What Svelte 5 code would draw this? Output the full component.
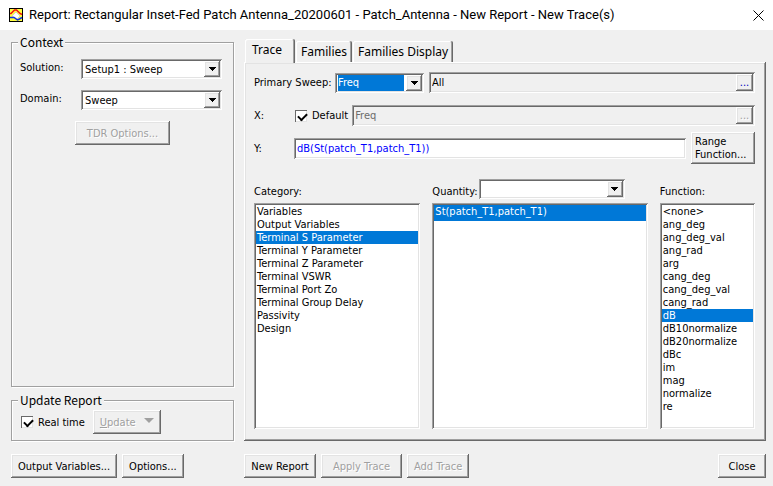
<script>
  const categories = [
    'Variables',
    'Output Variables',
    'Terminal S Parameter',
    'Terminal Y Parameter',
    'Terminal Z Parameter',
    'Terminal VSWR',
    'Terminal Port Zo',
    'Terminal Group Delay',
    'Passivity',
    'Design'
  ];
  const quantities = ['St(patch_T1,patch_T1)'];
  const functions = [
    '<none>', 'ang_deg', 'ang_deg_val', 'ang_rad', 'arg', 'cang_deg', 'cang_deg_val', 'cang_rad',
    'dB', 'dB10normalize', 'dB20normalize', 'dBc', 'im', 'mag', 'normalize', 're'
  ];
  const tabs = ['Trace', 'Families', 'Families Display'];

  let activeTab = $state('Trace');
  let category = $state('Terminal S Parameter');
  let quantity = $state('St(patch_T1,patch_T1)');
  let func = $state('dB');
  let realTime = $state(true);
  let useDefault = $state(true);
  let yExpr = $state('dB(St(patch_T1,patch_T1))');
</script>

{#snippet arrow()}
  <span class="arrow raised">
    <svg width="7" height="4" viewBox="0 0 7 4" shape-rendering="crispEdges"><path d="M0 0h7v1h-7zM1 1h5v1h-5zM2 2h3v1h-3zM3 3h1v1h-1z" /></svg>
  </span>
{/snippet}

<div class="dialog">
  <header>
    <svg class="logo" width="14" height="14" viewBox="0 0 14 14">
      <rect x="0.5" y="0.5" width="13" height="13" fill="#ffff40" stroke="#000" />
      <path d="M3 8L7 4l4 4-3 3z" fill="#fff" stroke="#bbb" stroke-width="0.6" />
      <path d="M1 5.5h1L5.5 2h2L11 5.5l2 1" fill="none" stroke="#f01010" stroke-width="1.5" />
      <path d="M1 9.5h4L8.5 12l2-1L13 9.5" fill="none" stroke="#1030e0" stroke-width="1.5" />
    </svg>
    <h1>Report: Rectangular Inset-Fed Patch Antenna_20200601 - Patch_Antenna - New Report - New Trace(s)</h1>
    <button class="close" aria-label="Close window">
      <svg width="11" height="11" viewBox="0 0 11 11"><path d="M.5 .5l10 10M10.5 .5l-10 10" stroke="#000" fill="none" /></svg>
    </button>
  </header>

  <main>
    <div class="left">
      <fieldset class="context">
        <legend>Context</legend>
        <div class="field">
          <label for="solution">Solution:</label>
          <div class="combo sunken">
            <select id="solution"><option>Setup1 : Sweep</option></select>
            {@render arrow()}
          </div>
        </div>
        <div class="field">
          <label for="domain">Domain:</label>
          <div class="combo sunken">
            <select id="domain"><option>Sweep</option></select>
            {@render arrow()}
          </div>
        </div>
        <button class="btn raised tdr" disabled>TDR Options...</button>
      </fieldset>

      <fieldset class="update">
        <legend>Update Report</legend>
        <div class="update-row">
          <label class="check"><input type="checkbox" bind:checked={realTime} />Real time</label>
          <button class="btn raised update-btn" disabled>
            <span><u>U</u>pdate</span>
            <svg width="10" height="5" viewBox="0 0 10 5"><path d="M0 0h10L5 5z" fill="#a0a0a0" /></svg>
          </button>
        </div>
      </fieldset>
    </div>

    <div class="right">
      <div class="tabs" role="tablist">
        {#each tabs as tab}
          <button role="tab" class="tab" class:active={tab === activeTab} aria-selected={tab === activeTab} onclick={() => (activeTab = tab)}>{tab}</button>
        {/each}
      </div>

      <div class="panel raised" role="tabpanel">
        <div class="row">
          <label class="wide" for="sweep">Primary Sweep:</label>
          <div class="combo sunken sweep">
            <select id="sweep" class="highlight"><option>Freq</option></select>
            {@render arrow()}
          </div>
          <div class="entry sunken">
            <input type="text" value="All" aria-label="Sweep values" readonly />
            <button class="dots raised" aria-label="Edit sweep">...</button>
          </div>
        </div>

        <div class="row">
          <label class="narrow" for="x-expr">X:</label>
          <label class="check"><input type="checkbox" bind:checked={useDefault} />Default</label>
          <div class="entry sunken">
            <input id="x-expr" type="text" value="Freq" disabled={useDefault} />
            <button class="dots raised" aria-label="Edit X" disabled={useDefault}>...</button>
          </div>
        </div>

        <div class="row y-row">
          <label class="narrow" for="y-expr">Y:</label>
          <div class="entry sunken white">
            <input id="y-expr" type="text" bind:value={yExpr} />
          </div>
          <button class="btn raised range">Range<br />Function...</button>
        </div>

        <div class="lists">
          <div class="list">
            <div class="list-head"><label for="category">Category:</label></div>
            <select id="category" class="listbox sunken" size="16" bind:value={category}>
              {#each categories as item}<option>{item}</option>{/each}
            </select>
          </div>
          <div class="list">
            <div class="list-head">
              <label for="quantity">Quantity:</label>
              <div class="combo sunken filter">
                <select aria-label="Quantity filter"><option></option></select>
                {@render arrow()}
              </div>
            </div>
            <select id="quantity" class="listbox sunken tall" size="12" bind:value={quantity}>
              {#each quantities as item}<option>{item}</option>{/each}
            </select>
          </div>
          <div class="list">
            <div class="list-head"><label for="function">Function:</label></div>
            <select id="function" class="listbox sunken" size="16" bind:value={func}>
              {#each functions as item}<option>{item}</option>{/each}
            </select>
          </div>
        </div>
      </div>
    </div>

    <div class="actions">
      <button class="btn raised">Output Variables...</button>
      <button class="btn raised">Options...</button>
    </div>
    <div class="actions">
      <button class="btn raised report">New Report</button>
      <button class="btn raised apply" disabled>Apply Trace</button>
      <button class="btn raised" disabled>Add Trace</button>
      <button class="btn raised end">Close</button>
    </div>
  </main>
</div>

<style>
  :global(body) {
    background: #f0f0f0;
  }
  .dialog {
    min-height: 100vh;
    display: flex;
    flex-direction: column;
    color: #000;
    font: 11px/13px "DejaVu Sans Condensed", Tahoma, sans-serif;
  }
  .dialog * {
    box-sizing: border-box;
  }
  button, input, select {
    font: inherit;
    color: inherit;
    margin: 0;
    border: 0;
    border-radius: 0;
    outline: none;
  }
  label {
    white-space: nowrap;
  }
  .raised {
    background: #f0f0f0;
    box-shadow: inset -1px -1px #696969, inset 1px 1px #fff, inset -2px -2px #a0a0a0, inset 2px 2px #e3e3e3;
  }
  .sunken {
    box-shadow: inset 1px 1px #a0a0a0, inset -1px -1px #fff, inset 2px 2px #696969, inset -2px -2px #e3e3e3;
  }

  header {
    height: 30px;
    display: flex;
    align-items: center;
    gap: 6px;
    padding: 0 9px;
    background: #fff;
  }
  h1 {
    flex: 1;
    margin: 0;
    font: 13px/18px Roboto, sans-serif;
    white-space: nowrap;
  }
  .close {
    display: flex;
    padding: 0;
    background: none;
  }

  main {
    flex: 1;
    display: grid;
    grid-template-columns: 223px 1fr;
    grid-template-rows: 1fr auto;
    gap: 13px 10px;
    padding: 5px 7px 8px 11px;
  }
  .left, .right {
    display: flex;
    flex-direction: column;
  }
  .left {
    gap: 6px;
  }
  fieldset {
    margin: 0;
    padding: 0 8px;
    border: 1px solid #a0a0a0;
    box-shadow: 1px 1px #fff, inset 1px 1px #fff;
  }
  legend {
    padding: 0 2px;
    margin-left: -2px;
    background: #f0f0f0;
    font: 12px/14px "Noto Sans CJK SC", sans-serif;
  }
  .context {
    flex: 1;
  }
  .field {
    display: flex;
    margin: 10px 3px 11px 0;
  }
  .field label {
    width: 61px;
    padding-top: 2px;
  }
  .combo {
    position: relative;
    flex: 1;
    height: 20px;
    padding: 2px;
    background: #fff;
  }
  .combo select {
    appearance: none;
    display: block;
    width: 100%;
    height: 16px;
    padding: 0 20px 0 2px;
    background: none;
  }
  .combo .highlight {
    padding: 0 18px 0 1px;
    color: #fff;
    background: #0078d7 content-box;
  }
  .arrow {
    position: absolute;
    top: 2px;
    right: 2px;
    width: 16px;
    height: 16px;
    display: flex;
    align-items: center;
    justify-content: center;
    pointer-events: none;
  }
  .btn {
    height: 24px;
    padding: 0 7px;
    white-space: nowrap;
  }
  .btn:disabled, .dots:disabled {
    color: #a0a0a0;
    text-shadow: 1px 1px #fff;
  }
  .tdr {
    display: block;
    width: 95px;
    margin-left: 55px;
  }
  .update-row {
    display: flex;
    align-items: center;
    gap: 8px;
    padding: 3px 0 6px 1px;
  }
  .check {
    display: flex;
    align-items: center;
    gap: 5px;
  }
  .check input {
    appearance: none;
    width: 12px;
    height: 12px;
    background: #fff;
    box-shadow: inset 1px 1px #696969, inset -1px -1px #e3e3e3;
  }
  .check input:checked::before {
    content: "";
    display: block;
    width: 7px;
    height: 4px;
    margin: 3px 0 0 3px;
    border: solid #000;
    border-width: 0 0 2px 2px;
    transform: rotate(-45deg);
  }
  .update-btn {
    display: flex;
    align-items: center;
    gap: 8px;
  }
  .update-btn svg {
    margin-bottom: 4px;
  }

  .tabs {
    display: flex;
    align-items: flex-end;
    gap: 1px;
    padding: 4px 0 0 1px;
  }
  .tab {
    height: 21px;
    padding: 0 5px;
    background: #f0f0f0;
    border-radius: 2px 2px 0 0;
    box-shadow: inset -1px 0 #696969, inset 1px 1px #fff, inset -2px 0 #a0a0a0;
    font: 12px/14px "Noto Sans", sans-serif;
  }
  .tab.active {
    position: relative;
    height: 24px;
    margin-bottom: -1px;
    padding: 0 13px 2px 7px;
  }
  .panel {
    flex: 1;
    display: flex;
    flex-direction: column;
    padding: 10px 11px 12px 10px;
  }
  .row {
    display: flex;
    align-items: center;
    margin-bottom: 12px;
  }
  .wide {
    width: 81px;
  }
  .narrow {
    width: 40px;
  }
  .sweep {
    flex: 0 0 89px;
    margin-right: 5px;
  }
  .entry {
    flex: 1;
    display: flex;
    height: 21px;
    padding: 2px;
  }
  .entry input {
    flex: 1;
    min-width: 0;
    padding: 0 1px;
    background: none;
  }
  .entry input:disabled {
    color: #6d6d6d;
  }
  .row .check {
    margin: 0 4px 0 1px;
  }
  .white {
    background: #fff;
    color: #0000ff;
  }
  .dots {
    width: 17px;
    padding: 0;
    color: #0000c0;
  }
  .y-row {
    margin: -6px 0 15px;
  }
  .range {
    width: 64px;
    height: 32px;
    margin-left: 5px;
    padding: 0 4px;
    text-align: left;
  }

  .lists {
    flex: 1;
    display: grid;
    grid-template-columns: 166fr 215fr 95fr;
    gap: 12px;
  }
  .list {
    display: flex;
    flex-direction: column;
    min-width: 0;
  }
  .list-head {
    display: flex;
    align-items: center;
    height: 20px;
    margin-bottom: 4px;
  }
  .list-head label {
    padding-top: 4px;
  }
  .filter {
    flex: 0 0 146px;
    margin-left: auto;
    margin-right: 23px;
  }
  .listbox {
    flex: 1;
    width: 100%;
    padding: 2px;
    background: #fff;
    overflow: hidden;
  }
  .listbox option {
    min-height: 13px;
    padding: 0 1px;
    line-height: 13px;
  }
  .tall option {
    min-height: 16px;
    line-height: 16px;
  }
  .listbox option:checked {
    background: linear-gradient(#0078d7, #0078d7);
    -webkit-text-fill-color: #fff;
  }

  .actions {
    display: flex;
    gap: 5px;
  }
  .report {
    width: 72px;
  }
  .apply {
    width: 81px;
  }
  .end {
    width: 48px;
    margin-left: auto;
  }
</style>
